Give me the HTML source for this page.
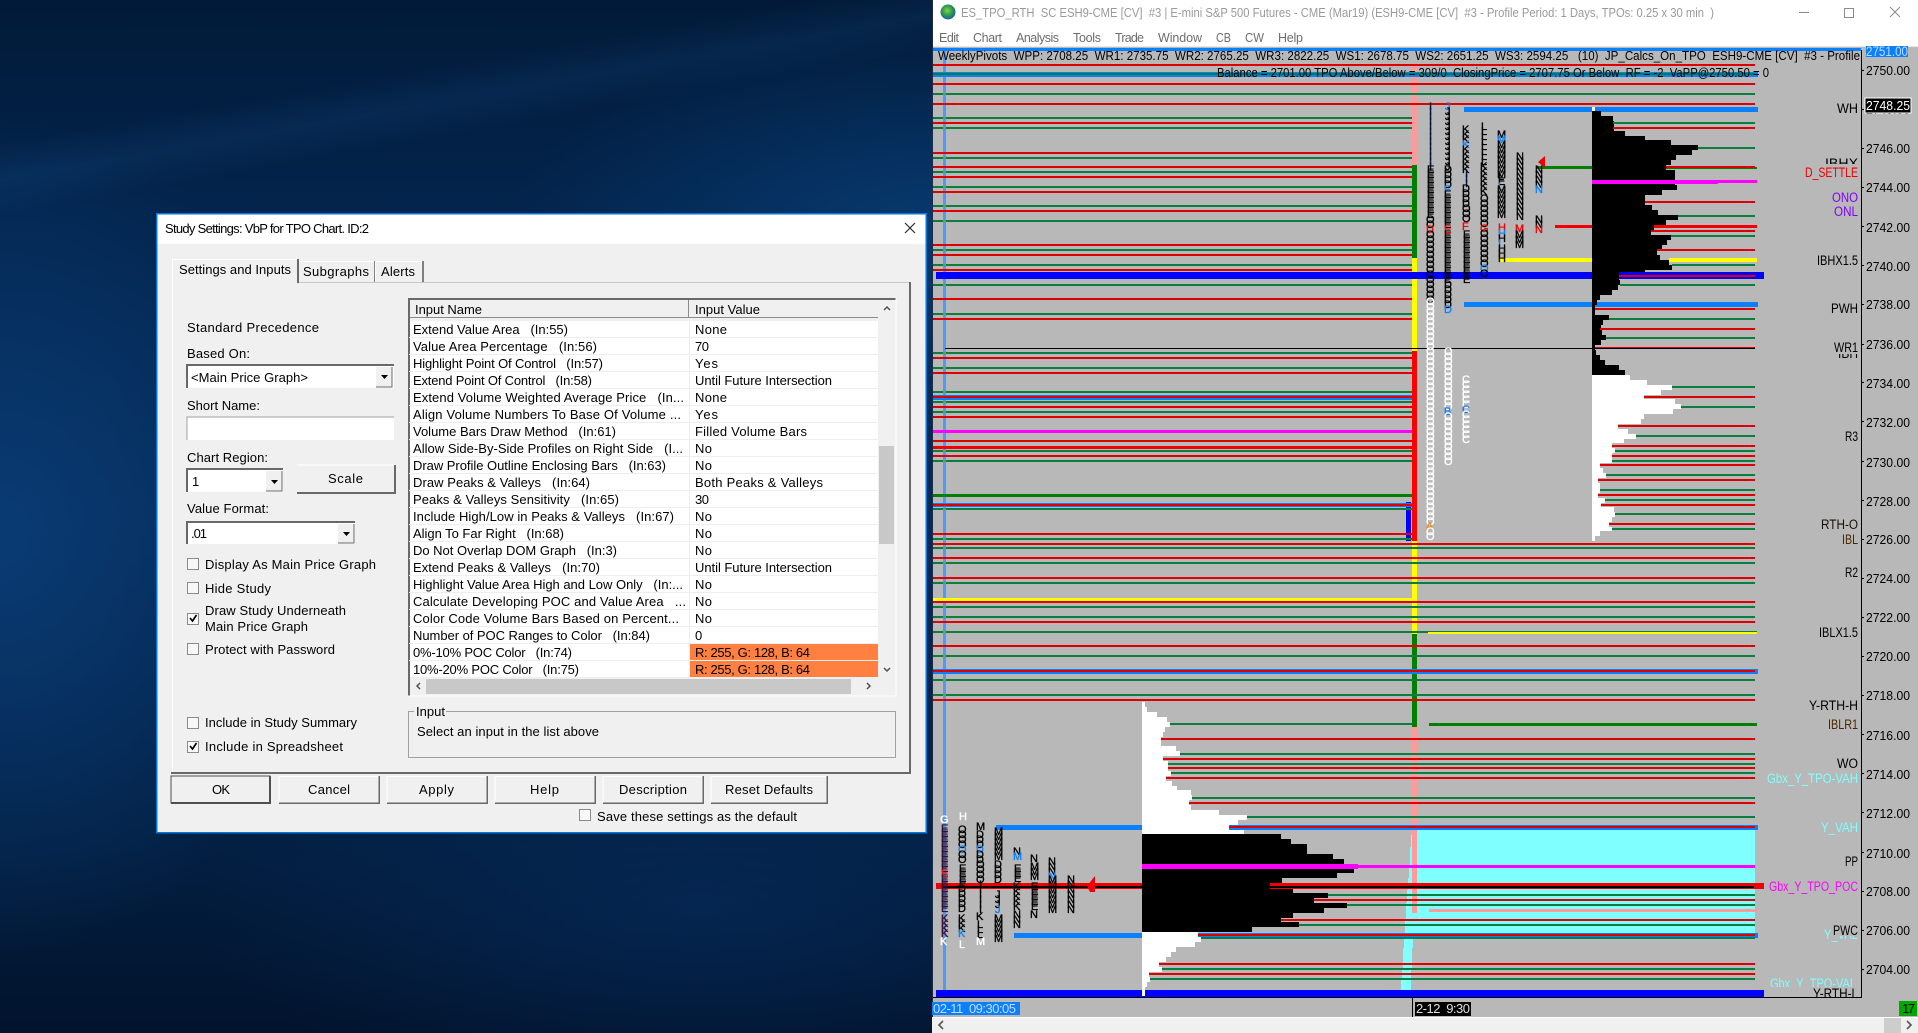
<!DOCTYPE html>
<html><head><meta charset="utf-8"><title>Study Settings</title>
<style>
html,body{margin:0;padding:0;width:1918px;height:1033px;overflow:hidden;background:#03203f}
#bg{position:absolute;left:0;top:0;width:932px;height:1033px;background:
linear-gradient(170deg,rgba(30,100,170,0) 12%,rgba(30,100,170,.14) 15%,rgba(30,100,170,0) 18%),
radial-gradient(ellipse 420px 200px at 100% 22%,rgba(8,66,125,.7),rgba(8,66,125,0) 100%),
radial-gradient(ellipse 330px 420px at 0% 52%,rgba(10,62,120,.85),rgba(10,62,120,0) 100%),
radial-gradient(ellipse 500px 200px at 75% 88%,rgba(6,45,95,.6),rgba(6,45,95,0) 100%),
linear-gradient(180deg,#021a38 0%,#03244c 20%,#052a58 50%,#031f42 82%,#02132c 100%)}
svg{position:absolute;left:0;top:0}
text{font-family:"Liberation Sans",sans-serif;white-space:pre}
.d text{font-size:13px;fill:#000}
.p text{font-size:13px;fill:#000}
.l text{font-size:13.5px;fill:#000}
.c{position:absolute;font:11px/5px "Liberation Sans",sans-serif;word-break:break-all;width:5px;color:#000;-webkit-text-stroke:.35px currentColor}
.c i{font-style:normal}.b{color:#0a80ff}.r{color:#f00000}.w{color:#fff}.o{color:#f08a20}
</style></head><body>
<div id="bg"></div>
<svg width="1918" height="1033" viewBox="0 0 1918 1033" xmlns="http://www.w3.org/2000/svg" shape-rendering="crispEdges">
<defs><radialGradient id="gl" cx=".45" cy=".4" r=".6"><stop offset="0" stop-color="#7fd24a"/><stop offset=".55" stop-color="#2f9a4a"/><stop offset="1" stop-color="#1a5fa8"/></radialGradient></defs>

<!-- chart window -->
<rect x="932" y="0" width="986" height="1033" fill="#fff"/>
<rect x="932" y="46" width="986" height="3" fill="#e8e8e8"/>
<rect x="932" y="0" width="1" height="1017" fill="#1c2c44"/>
<g shape-rendering="auto"><circle cx="948" cy="12" r="7.5" fill="url(#gl)"/></g>
<text x="961" y="17" font-size="12.5" fill="#9a9a9a" textLength="753" lengthAdjust="spacingAndGlyphs">ES_TPO_RTH  SC ESH9-CME [CV]  #3 | E-mini S&amp;P 500 Futures - CME (Mar19) (ESH9-CME [CV]  #3 - Profile Period: 1 Days, TPOs: 0.25 x 30 min  )</text>
<g font-size="12.5" fill="#6d6d6d">
<text x="939" y="42" textLength="20">Edit</text><text x="973" y="42" textLength="29">Chart</text><text x="1016" y="42" textLength="43">Analysis</text><text x="1073" y="42" textLength="28">Tools</text><text x="1115" y="42" textLength="29">Trade</text><text x="1158" y="42" textLength="44">Window</text><text x="1216" y="42" textLength="15" lengthAdjust="spacingAndGlyphs">CB</text><text x="1245" y="42" textLength="19" lengthAdjust="spacingAndGlyphs">CW</text><text x="1278" y="42" textLength="25">Help</text>
</g>
<path d="M1799 12.5h10" stroke="#8a8a8a" fill="none"/>
<rect x="1844.5" y="8.5" width="9" height="9" fill="none" stroke="#8a8a8a"/>
<g shape-rendering="auto"><path d="M1890 7l10 10M1900 7l-10 10" stroke="#8a8a8a" fill="none"/></g>

<!-- chart area -->
<rect x="933" y="47" width="985" height="970" fill="#b8b8b8"/>
<rect x="933" y="48" width="928" height="3" fill="#0a80ff"/>
<rect x="943" y="51" width="3" height="947" fill="#4a9bff"/>

<!-- cyan -->
<path fill="#7fffff" d="M1755 830H1412V835H1411V847H1410V867H1409V878H1408V890H1407V903H1406V920H1405V933H1755ZM1404 933H1413V948H1404ZM1403 948H1412V970H1403ZM1402 970H1411V980H1402ZM1401 980H1411V990H1401Z"/>

<!-- vertical multi colour bar -->
<rect x="1412" y="64" width="5" height="101" fill="#ff9a9a"/>
<rect x="1412" y="165" width="5" height="93" fill="#007f00"/>
<rect x="1412" y="258" width="5" height="93" fill="#ffff00"/>
<rect x="1412" y="351" width="5" height="190" fill="#ff0000"/>
<rect x="1412" y="541" width="5" height="93" fill="#ffff00"/>
<rect x="1412" y="634" width="5" height="93" fill="#007f00"/>
<rect x="1412" y="727" width="5" height="186" fill="#ff9a9a"/>
<rect x="1406" y="502" width="5" height="39" fill="#0000ff"/>

<!-- thick blue -->
<g fill="#0a80ff">
<rect x="933" y="72" width="825" height="5"/>
<rect x="933" y="395" width="479" height="5"/>
<rect x="933" y="503" width="479" height="4"/>
<rect x="933" y="669" width="825" height="5"/>
<rect x="1464" y="107" width="294" height="5"/>
<rect x="1464" y="302" width="294" height="5"/>
<rect x="996" y="825" width="146" height="5"/>
<rect x="1229" y="825" width="529" height="5"/>
<rect x="1014" y="933" width="128" height="5"/>
<rect x="1198" y="933" width="560" height="5"/>
</g>

<!-- profiles -->
<g transform="translate(1592)">
<path fill="#000" d="M0 111H9V116H21V121H22V131H33V136H53V140H79V145H106V150H100V155H84V160H79V165H74V170H83V185H85V190H70V195H53V205H60V210H66V215H86V220H74V225H62V230H59V235H79V240H75V245H70V250H65V255H68V260H77V265H80V270H53V275H27V280H28V285H26V290H20V295H8V300H5V305H3V315H17V320H11V325H9V330H10V335H14V340H9V345H3V350H4V355H8V360H13V365H27V370H33V375H0Z"/>
<path fill="#fff" d="M0 375H38V380H55V385H80V390H69V395H52V399H83V404H89V409H81V414H52V419H49V424H26V429H36V434H44V439H32V443H20V448H23V453H20V463H8V468H11V473H14V478H6V483H8V493H6V498H13V503H9V507H22V512H23V517H20V522H17V527H20V531H8V536H3V541H0Z"/>
<rect x="0" y="107" width="3" height="4" fill="#fff"/>
</g>
<g transform="translate(1142)">
<path fill="#fff" d="M0 702H3V707H5V712H15V717H25V722H28V727H23V732H21V737H19V746H34V751H38V756H21V761H26V771H29V776H24V781H30V786H35V790H49V795H50V800H47V805H49V810H77V815H105V820H96V825H87V830H102V834H0Z"/>
<path fill="#000" d="M0 834H139V839H149V844H165V854H191V859H202V864H216V869H212V873H195V878H140V883H128V888H151V893H186V898H172V903H205V908H182V913H151V918H139V922H157V927H110V932H0Z"/>
<path fill="#fff" d="M0 932H56V937H59V942H53V947H34V952H29V957H24V962H17V967H20V972H7V977H8V982H5V987H3V996H0Z"/>
</g>

<!-- green thin lines -->
<path stroke="#0b7d3e" stroke-width="2" fill="none" d="M933 74H1755M933 94H1755M933 118H1412M933 128H1412M933 158H1412M933 172H1412M933 187H1412M933 206H1412M933 221H1412M933 250H1412M933 265H1412M933 285H1412M933 314H1412M933 353H1412M933 368H1412M933 392H1412M933 402H1412M933 412H1412M933 451H1412M933 461H1412M933 509H1412M933 539H1412
M933 548H1755M933 563H1755M933 583H1755M933 607H1755M933 617H1755M933 632H1755M933 656H1755M933 680H1755M933 695H1755
M1613 123H1755M1698 148H1755M1678 216H1755M1671 236H1755M1672 265H1755M1620 285H1755M1609 319H1755M1606 338H1755M1672 387H1755M1681 407H1755M1636 436H1755M1615 451H1755M1612 461H1755M1606 475H1755M1600 490H1755M1605 500H1755M1615 514H1755M1612 529H1755
M1170 724H1412M1180 754H1755M1168 764H1755M1171 773H1755M1192 798H1755M1247 817H1755M1328 895H1755M1347 905H1755M1299 925H1755M1201 938H1755M1162 969H1755M1150 979H1755"/>
<!-- olive crossings -->
<path stroke="#7f9a24" stroke-width="2" fill="none" d="M943 94h3M943 118h3M943 128h3M943 158h3M943 172h3M943 187h3M943 206h3M943 221h3M943 250h3M943 265h3M943 285h3M943 314h3M943 353h3M943 368h3M943 392h3M943 402h3M943 412h3M943 451h3M943 461h3M943 509h3M943 539h3M943 548h3M943 563h3M943 583h3M943 607h3M943 617h3M943 632h3M943 656h3M943 680h3M943 695h3"/>
<!-- red thin lines -->
<path stroke="#dc0000" stroke-width="2" fill="none" d="M933 65H1755M933 84H1755M933 104H1755M933 123H1412M933 153H1412M933 167H1412M933 177H1412M933 192H1412M933 211H1412M933 245H1412M933 255H1412M933 270H1412M933 299H1412M933 319H1412M933 358H1412M933 373H1412M933 397H1412M933 407H1412M933 417H1412M933 441H1412M933 456H1412M933 505H1412M933 534H1412
M933 544H1755M933 558H1755M933 578H1755M933 602H1755M933 622H1755M933 646H1755M933 671H1755M933 700H1755
M1613 128H1755M1666 167H1755M1645 202H1755M1651 231H1755M1657 250H1755M1619 275H1755M1595 309H1755M1600 329H1755M1595 348H1755M1644 397H1755M1618 426H1755M1612 446H1755M1612 456H1755M1600 465H1755M1598 480H1755M1598 495H1755M1601 505H1755M1609 524H1755
M1161 739H1755M1163 759H1755M1168 768H1755M1166 778H1755M1189 803H1755M1229 827H1755M1314 900H1755M1281 920H1755M1198 935H1755M1159 964H1755M1149 974H1755"/>

<!-- thick lines -->
<rect x="933" y="430" width="479" height="3" fill="#ff00ff"/>
<rect x="933" y="446" width="479" height="3" fill="#f00000"/>
<rect x="933" y="494" width="479" height="3" fill="#007f00"/>
<rect x="933" y="598" width="479" height="3" fill="#ffff00"/>
<rect x="945" y="348" width="810" height="1" fill="#000"/>
<rect x="936" y="272" width="828" height="7" fill="#0000ff"/>
<rect x="1592" y="272" width="27" height="7" fill="#000"/>
<rect x="1619" y="275" width="136" height="2" fill="#dc0000"/>
<rect x="936" y="990" width="828" height="7" fill="#0000ff"/>
<rect x="1142" y="990" width="3" height="6" fill="#fff"/>
<rect x="1537" y="166" width="55" height="3" fill="#007f00"/>
<rect x="1666" y="167" width="91" height="2" fill="#007f00"/>
<rect x="1666" y="166" width="89" height="2" fill="#dc0000"/>
<rect x="1555" y="225" width="37" height="3" fill="#f00000"/>
<rect x="1654" y="225" width="103" height="3" fill="#f00000"/>
<rect x="1500" y="258" width="92" height="4" fill="#ffff00"/>
<rect x="1669" y="258" width="88" height="4" fill="#ffff00"/>
<rect x="1592" y="180" width="165" height="3" fill="#ff00ff"/>
<rect x="1592" y="180" width="126" height="4" fill="#ff00ff"/>
<rect x="1428" y="631" width="329" height="3" fill="#ffff00"/>
<rect x="1428" y="631" width="329" height="1" fill="#0b7d3e"/>
<rect x="1429" y="723" width="328" height="3" fill="#007f00"/>
<rect x="1429" y="909" width="328" height="3" fill="#ff9a9a"/>
<rect x="936" y="883" width="206" height="6" fill="#f00000"/>
<rect x="1270" y="883" width="494" height="6" fill="#f00000"/>
<rect x="943" y="886" width="199" height="2" fill="#000"/>
<rect x="1142" y="886" width="128" height="2" fill="#000"/>
<rect x="1270" y="886" width="484" height="2" fill="#000"/>
<rect x="1142" y="864" width="216" height="5" fill="#ff00ff"/>
<rect x="1358" y="865" width="397" height="3" fill="#ff00ff"/>
<rect x="1412" y="725" width="5" height="2" fill="#007f00"/>
<g shape-rendering="auto">
<path d="M1538 162L1545 156V168Z" fill="#f00000"/>
<path d="M1087 886L1095 876V892H1090Z" fill="#f00000"/>
</g>

<text x="938" y="60" font-size="13" fill="#000" textLength="922" lengthAdjust="spacingAndGlyphs">WeeklyPivots  WPP: 2708.25  WR1: 2735.75  WR2: 2765.25  WR3: 2822.25  WS1: 2678.75  WS2: 2651.25  WS3: 2594.25   (10)  JP_Calcs_On_TPO  ESH9-CME [CV]  #3 - Profile</text>
<text x="1217" y="77" font-size="13" fill="#000" textLength="552" lengthAdjust="spacingAndGlyphs">Balance = 2701.00 TPO Above/Below = 309/0  ClosingPrice = 2707.75 Or Below  RF = -2  VaPP@2750.50 = 0</text>

<!-- axis -->
<rect x="1861" y="50" width="1" height="947" fill="#000"/>
<path stroke="#000" fill="none" d="M1862 70.5h2M1862 148.5h2M1862 187.5h2M1862 226.5h2M1862 265.5h2M1862 304.5h2M1862 344.5h2M1862 382.5h2M1862 421.5h2M1862 461.5h2M1862 500.5h2M1862 539.5h2M1862 578.5h2M1862 617.5h2M1862 656.5h2M1862 695.5h2M1862 734.5h2M1862 773.5h2M1862 812.5h2M1862 852.5h2M1862 891.5h2M1862 930.5h2M1862 969.5h2M1862 109.5h2"/>
<rect x="1866" y="46" width="42" height="11" fill="#0a80ff"/>
<svg x="1866" y="46" width="42" height="11"><text x="0" y="10" font-size="13.5" fill="#b8dcff" textLength="42" lengthAdjust="spacingAndGlyphs">2751.00</text></svg>
<g class="p">
<text x="1866" y="75" textLength="44" lengthAdjust="spacingAndGlyphs">2750.00</text>
<text x="1866" y="114" textLength="44" lengthAdjust="spacingAndGlyphs">2748.00</text>
<text x="1866" y="153" textLength="44" lengthAdjust="spacingAndGlyphs">2746.00</text>
<text x="1866" y="192" textLength="44" lengthAdjust="spacingAndGlyphs">2744.00</text>
<text x="1866" y="232" textLength="44" lengthAdjust="spacingAndGlyphs">2742.00</text>
<text x="1866" y="271" textLength="44" lengthAdjust="spacingAndGlyphs">2740.00</text>
<text x="1866" y="309" textLength="44" lengthAdjust="spacingAndGlyphs">2738.00</text>
<text x="1866" y="349" textLength="44" lengthAdjust="spacingAndGlyphs">2736.00</text>
<text x="1866" y="388" textLength="44" lengthAdjust="spacingAndGlyphs">2734.00</text>
<text x="1866" y="427" textLength="44" lengthAdjust="spacingAndGlyphs">2732.00</text>
<text x="1866" y="467" textLength="44" lengthAdjust="spacingAndGlyphs">2730.00</text>
<text x="1866" y="506" textLength="44" lengthAdjust="spacingAndGlyphs">2728.00</text>
<text x="1866" y="544" textLength="44" lengthAdjust="spacingAndGlyphs">2726.00</text>
<text x="1866" y="583" textLength="44" lengthAdjust="spacingAndGlyphs">2724.00</text>
<text x="1866" y="622" textLength="44" lengthAdjust="spacingAndGlyphs">2722.00</text>
<text x="1866" y="661" textLength="44" lengthAdjust="spacingAndGlyphs">2720.00</text>
<text x="1866" y="700" textLength="44" lengthAdjust="spacingAndGlyphs">2718.00</text>
<text x="1866" y="740" textLength="44" lengthAdjust="spacingAndGlyphs">2716.00</text>
<text x="1866" y="779" textLength="44" lengthAdjust="spacingAndGlyphs">2714.00</text>
<text x="1866" y="818" textLength="44" lengthAdjust="spacingAndGlyphs">2712.00</text>
<text x="1866" y="858" textLength="44" lengthAdjust="spacingAndGlyphs">2710.00</text>
<text x="1866" y="896" textLength="44" lengthAdjust="spacingAndGlyphs">2708.00</text>
<text x="1866" y="935" textLength="44" lengthAdjust="spacingAndGlyphs">2706.00</text>
<text x="1866" y="974" textLength="44" lengthAdjust="spacingAndGlyphs">2704.00</text>
</g>
<rect x="1865" y="98" width="46" height="15" fill="#000" stroke="#fff"/>
<text x="1866" y="110" font-size="13" fill="#fff" textLength="44" lengthAdjust="spacingAndGlyphs">2748.25</text>

<!-- right labels -->
<g class="l">
<text x="1825" y="168" textLength="33" lengthAdjust="spacingAndGlyphs">IBHX</text>
<rect x="1805" y="164" width="53" height="16" fill="#b8b8b8"/>
<text x="1837" y="113" textLength="21" lengthAdjust="spacingAndGlyphs">WH</text>
<text x="1805" y="177" style="fill:#f00000" textLength="53" lengthAdjust="spacingAndGlyphs">D_SETTLE</text>
<text x="1832" y="202" style="fill:#8000ff" textLength="26" lengthAdjust="spacingAndGlyphs">ONO</text>
<text x="1834" y="216" style="fill:#8000ff" textLength="24" lengthAdjust="spacingAndGlyphs">ONL</text>
<text x="1817" y="265" textLength="41" lengthAdjust="spacingAndGlyphs">IBHX1.5</text>
<text x="1831" y="313" textLength="27" lengthAdjust="spacingAndGlyphs">PWH</text>
<text x="1838" y="358" textLength="20" lengthAdjust="spacingAndGlyphs">IBH</text>
<rect x="1834" y="340" width="24" height="14" fill="#b8b8b8"/>
<text x="1834" y="352" textLength="24" lengthAdjust="spacingAndGlyphs">WR1</text>
<text x="1845" y="441" textLength="13" lengthAdjust="spacingAndGlyphs">R3</text>
<text x="1821" y="529" style="fill:#1a1008" textLength="37" lengthAdjust="spacingAndGlyphs">RTH-O</text>
<text x="1842" y="544" style="fill:#4a2800" textLength="16" lengthAdjust="spacingAndGlyphs">IBL</text>
<text x="1845" y="577" textLength="13" lengthAdjust="spacingAndGlyphs">R2</text>
<text x="1819" y="637" textLength="39" lengthAdjust="spacingAndGlyphs">IBLX1.5</text>
<text x="1809" y="710" textLength="49" lengthAdjust="spacingAndGlyphs">Y-RTH-H</text>
<text x="1828" y="729" style="fill:#4a2800" textLength="30" lengthAdjust="spacingAndGlyphs">IBLR1</text>
<text x="1837" y="768" textLength="21" lengthAdjust="spacingAndGlyphs">WO</text>
<text x="1767" y="783" style="fill:#7fffff" textLength="91" lengthAdjust="spacingAndGlyphs">Gbx_Y_TPO-VAH</text>
<text x="1821" y="832" style="fill:#7fffff" textLength="37" lengthAdjust="spacingAndGlyphs">Y_VAH</text>
<text x="1845" y="866" textLength="13" lengthAdjust="spacingAndGlyphs">PP</text>
<text x="1769" y="891" style="fill:#ff00ff" textLength="89" lengthAdjust="spacingAndGlyphs">Gbx_Y_TPO_POC</text>
<text x="1824" y="939" style="fill:#7fffff" textLength="34" lengthAdjust="spacingAndGlyphs">Y_VAL</text>
<rect x="1832" y="923" width="26" height="13" fill="#b8b8b8"/>
<text x="1833" y="935" textLength="25" lengthAdjust="spacingAndGlyphs">PWC</text>
<text x="1770" y="988" style="fill:#7fffff" textLength="86" lengthAdjust="spacingAndGlyphs">Gbx_Y_TPO-VAL</text>
<rect x="1770" y="987" width="88" height="10" fill="#b8b8b8"/>
<text x="1813" y="998" textLength="45" lengthAdjust="spacingAndGlyphs">Y-RTH-L</text>
</g>

<!-- bottom -->
<rect x="933" y="997" width="985" height="20" fill="#b8b8b8"/>
<rect x="933" y="997" width="929" height="1" fill="#000"/>
<rect x="1412" y="997" width="1" height="20" fill="#000"/>
<rect x="932" y="1002" width="88" height="13" fill="#0a80ff"/>
<text x="933" y="1013" font-size="13" fill="#c4dcf6" textLength="83">02-11  09:30:05</text>
<rect x="1415" y="1002" width="56" height="14" fill="#000"/>
<text x="1416" y="1013" font-size="13" fill="#e0e0e0" textLength="54">2-12  9:30</text>
<rect x="1899" y="1001" width="18" height="15" fill="#00a800"/>
<text x="1902" y="1013" font-size="13" fill="#000" textLength="13">17</text>
<rect x="932" y="1017" width="986" height="16" fill="#f0f0f0"/>
<rect x="932" y="1017" width="986" height="1" fill="#fff"/>
<rect x="1884" y="1018" width="17" height="15" fill="#cdcdcd"/>
<g shape-rendering="auto"><path d="M943 1021l-4 4 4 4M1907 1021l4 4-4 4" stroke="#555" stroke-width="1.6" fill="none"/></g>

<!-- DIALOG -->
<g class="d">
<rect x="156" y="214" width="770" height="618" fill="#f0f0f0"/>
<rect x="156" y="214" width="770" height="30" fill="#fff"/>
<rect x="156.5" y="213.5" width="769.5" height="619" fill="none" stroke="#0078d7" stroke-width="1.5"/>
<text x="165" y="233" textLength="204">Study Settings: VbP for TPO Chart. ID:2</text>
<g shape-rendering="auto"><path d="M905 223l10 10M915 223l-10 10" stroke="#222" fill="none" stroke-width="1.1"/></g>

<!-- tabs -->
<rect x="172" y="282" width="739" height="491" fill="#f0f0f0"/>
<rect x="172" y="282" width="739" height="1" fill="#c8c8c8"/>
<rect x="172" y="282" width="1" height="491" fill="#fff"/>
<rect x="909" y="282" width="2" height="492" fill="#696969"/>
<rect x="171" y="772" width="740" height="2" fill="#696969"/>
<rect x="172" y="259" width="126" height="24" fill="#f0f0f0"/>
<rect x="172" y="259" width="126" height="1" fill="#fff"/>
<rect x="172" y="259" width="1" height="24" fill="#fff"/>
<rect x="297" y="259" width="2" height="24" fill="#696969"/>
<rect x="299" y="261" width="76" height="1" fill="#fff"/>
<rect x="374" y="261" width="1" height="21" fill="#808080"/>
<rect x="375" y="261" width="1" height="21" fill="#fff"/>
<rect x="376" y="261" width="47" height="1" fill="#fff"/>
<rect x="422" y="261" width="2" height="21" fill="#808080"/>
<text x="179" y="274" textLength="112">Settings and Inputs</text>
<text x="303" y="276" textLength="66">Subgraphs</text>
<text x="381" y="276" textLength="34">Alerts</text>

<!-- left labels -->
<text x="187" y="332" textLength="132">Standard Precedence</text>
<text x="187" y="358" textLength="63">Based On:</text>
<rect x="187" y="365" width="207" height="23" fill="#fff"/>
<path d="M187 388V365H394" fill="none" stroke="#696969" stroke-width="2"/>
<rect x="376" y="367" width="16" height="20" fill="#f0f0f0"/>
<path d="M392 367V387H376" fill="none" stroke="#696969"/>
<path d="M381 375h7l-3.5 4z" fill="#000" shape-rendering="auto"/>
<text x="191" y="382" textLength="117">&lt;Main Price Graph&gt;</text>
<text x="187" y="410" textLength="73">Short Name:</text>
<rect x="187" y="417" width="207" height="23" fill="#fff"/>
<path d="M187 440V417H394" fill="none" stroke="#a0a0a0" stroke-width="1"/>
<text x="187" y="462" textLength="81">Chart Region:</text>
<rect x="187" y="469" width="96" height="23" fill="#fff"/>
<path d="M187 492V469H283" fill="none" stroke="#696969" stroke-width="2"/>
<rect x="266" y="471" width="16" height="20" fill="#f0f0f0"/>
<path d="M282 471V491H266" fill="none" stroke="#696969"/>
<path d="M271 480h7l-3.5 4z" fill="#000" shape-rendering="auto"/>
<text x="192" y="486">1</text>
<rect x="297" y="465" width="98" height="28" fill="#f0f0f0"/>
<path d="M297 465H395" stroke="#fff" fill="none"/>
<path d="M395 465V493H297" stroke="#696969" fill="none" stroke-width="2"/>
<text x="328" y="483" textLength="35">Scale</text>
<text x="187" y="513" textLength="82">Value Format:</text>
<rect x="187" y="522" width="168" height="22" fill="#fff"/>
<path d="M187 544V522H355" fill="none" stroke="#696969" stroke-width="2"/>
<rect x="338" y="524" width="16" height="19" fill="#f0f0f0"/>
<path d="M354 524V543H338" fill="none" stroke="#696969"/>
<path d="M343 532h7l-3.5 4z" fill="#000" shape-rendering="auto"/>
<text x="191" y="538" textLength="16">.01</text>

<!-- checkboxes -->
<g fill="#f8f8f8" stroke="#8a8a8a">
<rect x="187.5" y="558.5" width="11" height="11"/>
<rect x="187.5" y="582.5" width="11" height="11"/>
<rect x="187.5" y="613.5" width="11" height="11"/>
<rect x="187.5" y="643.5" width="11" height="11"/>
<rect x="187.5" y="717.5" width="11" height="11"/>
<rect x="187.5" y="741.5" width="11" height="11"/>
<rect x="579.5" y="809.5" width="11" height="11"/>
</g>
<g shape-rendering="auto" fill="none" stroke="#000" stroke-width="1.7"><path d="M190 618l2.5 3 4-6"/><path d="M190 746l2.5 3 4-6"/></g>
<text x="205" y="569" textLength="171">Display As Main Price Graph</text>
<text x="205" y="593" textLength="66">Hide Study</text>
<text x="205" y="615" textLength="141">Draw Study Underneath</text>
<text x="205" y="631" textLength="103">Main Price Graph</text>
<text x="205" y="654" textLength="130">Protect with Password</text>
<text x="205" y="727" textLength="152">Include in Study Summary</text>
<text x="205" y="751" textLength="138">Include in Spreadsheet</text>
<text x="597" y="821" textLength="200">Save these settings as the default</text>

<!-- grid -->
<rect x="408" y="298" width="488" height="398" fill="#f0f0f0"/>
<rect x="409" y="321" width="469" height="356" fill="#fff"/>
<path d="M409 696V299H896" fill="none" stroke="#696969" stroke-width="2"/>
<path d="M896 298V696H408" fill="none" stroke="#fff"/>
<rect x="410" y="317" width="468" height="1" fill="#8a8a8a"/>
<rect x="688" y="300" width="1" height="18" fill="#8a8a8a"/>
<text x="415" y="314" textLength="67">Input Name</text>
<text x="695" y="314" textLength="65">Input Value</text>
<path stroke="#eeeeee" fill="none" d="M409 337.5H878M409 354.5H878M409 371.5H878M409 388.5H878M409 405.5H878M409 422.5H878M409 439.5H878M409 456.5H878M409 473.5H878M409 490.5H878M409 507.5H878M409 524.5H878M409 541.5H878M409 558.5H878M409 575.5H878M409 592.5H878M409 609.5H878M409 626.5H878M409 643.5H878M409 660.5H878M689.5 321V677"/>
<rect x="690" y="644" width="188" height="16" fill="#ff8040"/>
<rect x="690" y="661" width="188" height="16" fill="#ff8040"/>
<rect x="879" y="446" width="15" height="98" fill="#c8c8c8"/>
<rect x="426" y="679" width="425" height="15" fill="#c8c8c8"/>
<g shape-rendering="auto" fill="none" stroke="#505050" stroke-width="1.5"><path d="M884 310l3-3 3 3M884 668l3 3 3-3M420 683l-3 3 3 3M867 683l3 3-3 3"/></g>

<text x="413" y="334" textLength="155">Extend Value Area   (In:55)</text><text x="695" y="334" textLength="32">None</text>
<text x="413" y="351" textLength="184">Value Area Percentage   (In:56)</text><text x="695" y="351" textLength="14">70</text>
<text x="413" y="368" textLength="190">Highlight Point Of Control   (In:57)</text><text x="695" y="368" textLength="23">Yes</text>
<text x="413" y="385" textLength="179">Extend Point Of Control   (In:58)</text><text x="695" y="385" textLength="137">Until Future Intersection</text>
<text x="413" y="402" textLength="271">Extend Volume Weighted Average Price   (In...</text><text x="695" y="402" textLength="32">None</text>
<text x="413" y="419" textLength="268">Align Volume Numbers To Base Of Volume ...</text><text x="695" y="419" textLength="23">Yes</text>
<text x="413" y="436" textLength="203">Volume Bars Draw Method   (In:61)</text><text x="695" y="436" textLength="112">Filled Volume Bars</text>
<text x="413" y="453" textLength="270">Allow Side-By-Side Profiles on Right Side   (I...</text><text x="695" y="453" textLength="17">No</text>
<text x="413" y="470" textLength="253">Draw Profile Outline Enclosing Bars   (In:63)</text><text x="695" y="470" textLength="17">No</text>
<text x="413" y="487" textLength="177">Draw Peaks &amp; Valleys   (In:64)</text><text x="695" y="487" textLength="128">Both Peaks &amp; Valleys</text>
<text x="413" y="504" textLength="206">Peaks &amp; Valleys Sensitivity   (In:65)</text><text x="695" y="504" textLength="14">30</text>
<text x="413" y="521" textLength="261">Include High/Low in Peaks &amp; Valleys   (In:67)</text><text x="695" y="521" textLength="17">No</text>
<text x="413" y="538" textLength="151">Align To Far Right   (In:68)</text><text x="695" y="538" textLength="17">No</text>
<text x="413" y="555" textLength="204">Do Not Overlap DOM Graph   (In:3)</text><text x="695" y="555" textLength="17">No</text>
<text x="413" y="572" textLength="187">Extend Peaks &amp; Valleys   (In:70)</text><text x="695" y="572" textLength="137">Until Future Intersection</text>
<text x="413" y="589" textLength="270">Highlight Value Area High and Low Only   (In:...</text><text x="695" y="589" textLength="17">No</text>
<text x="413" y="606" textLength="273">Calculate Developing POC and Value Area   ...</text><text x="695" y="606" textLength="17">No</text>
<text x="413" y="623" textLength="266">Color Code Volume Bars Based on Percent...</text><text x="695" y="623" textLength="17">No</text>
<text x="413" y="640" textLength="237">Number of POC Ranges to Color   (In:84)</text><text x="695" y="640" textLength="7">0</text>
<text x="413" y="657" textLength="159">0%-10% POC Color   (In:74)</text><text x="695" y="657" textLength="115">R: 255, G: 128, B: 64</text>
<text x="413" y="674" textLength="166">10%-20% POC Color   (In:75)</text><text x="695" y="674" textLength="115">R: 255, G: 128, B: 64</text>

<!-- input group -->
<rect x="408.5" y="711.5" width="487" height="46" fill="none" stroke="#a0a0a0"/>
<rect x="414" y="708" width="32" height="8" fill="#f0f0f0"/>
<text x="416" y="716" textLength="29">Input</text>
<text x="417" y="736" textLength="182">Select an input in the list above</text>

<!-- buttons -->
<rect x="171" y="776" width="99" height="27" fill="#f0f0f0" stroke="#505050" stroke-width="1"/>
<path d="M270 776V803H171" fill="none" stroke="#505050" stroke-width="2"/>
<text x="212" y="794" textLength="18">OK</text>
<g fill="#f0f0f0">
<rect x="279" y="776" width="100" height="27"/><rect x="387" y="776" width="100" height="27"/><rect x="495" y="776" width="100" height="27"/><rect x="603" y="776" width="100" height="27"/><rect x="711" y="776" width="116" height="27"/>
</g>
<path fill="none" stroke="#fff" d="M279 803V776.5H379M387 803V776.5H487M495 803V776.5H595M603 803V776.5H703M711 803V776.5H827"/>
<path fill="none" stroke="#696969" stroke-width="1.5" d="M379 776V803H279M487 776V803H387M595 776V803H495M703 776V803H603M827 776V803H711"/>
<text x="308" y="794" textLength="42">Cancel</text>
<text x="419" y="794" textLength="35">Apply</text>
<text x="530" y="794" textLength="29">Help</text>
<text x="619" y="794" textLength="68">Description</text>
<text x="725" y="794" textLength="88">Reset Defaults</text>
</g>
</svg>

<!-- TPO letter columns (upper) -->
<div class="c" style="left:1429px;top:105px;color:#001040">IIIIIIIIIIIII</div>
<div class="c" style="left:1427px;top:168px">EEEEEEEEEE</div>
<div class="c" style="left:1426px;top:218px">OO<i class="r">D</i>OOOOOOOOOOOOOO</div>
<div class="c w" style="left:1426px;top:300px">OOOOOOOOOOOOOOOOOOOOOOOOOOOOOOOOOOOOOOOOOOOOO<i class="o">A</i>OO</div>
<div class="c" style="left:1445px;top:105px"><i class="b">J</i>JJJJJJJJJJJJ</div>
<div class="c" style="left:1444px;top:168px">DDDD<i class="b">F</i>EEEEEEE<i class="r">E</i>EEEEEEEEEEDDDDD<i class="b">D</i></div>
<div class="c w" style="left:1444px;top:350px">OOOOOOOOOOOO<i class="b">B</i>OOOOOOOOOO</div>
<div class="c" style="left:1462px;top:128px">KKK<i class="b">K</i>KKKKK</div>
<div class="c" style="left:1465px;top:172px;color:#001040">III</div>
<div class="c" style="left:1462px;top:187px">DDDDOOO</div>
<div class="c r" style="left:1462px;top:225px">F</div>
<div class="c" style="left:1463px;top:233px">EEEEEEEEEE</div>
<div class="c w" style="left:1462px;top:378px">CCCCCC<i class="b">C</i>CCCCCC</div>
<div class="c" style="left:1481px;top:125px">LLLLLLLL</div>
<div class="c" style="left:1480px;top:165px">KKKKKK</div>
<div class="c" style="left:1480px;top:197px">OOOOOO<i class="r">G</i></div>
<div class="c" style="left:1480px;top:232px">OOOOOOO<i class="b">O</i>O</div>
<div class="c" style="left:1497px;top:133px">M<i class="b">M</i>MMMMMMM</div>
<div class="c" style="left:1498px;top:175px">LE<i class="b">L</i></div>
<div class="c" style="left:1497px;top:188px">MMMMMM</div>
<div class="c r" style="left:1498px;top:226px">H</div>
<div class="c" style="left:1498px;top:232px"><i class="b">H</i>H<i class="b">I</i>HHH</div>
<div class="c" style="left:1516px;top:155px">NNNNNNNNNNNNN</div>
<div class="c r" style="left:1515px;top:227px">M</div>
<div class="c" style="left:1515px;top:233px">MMM</div>
<div class="c" style="left:1535px;top:168px">NNNN<i class="b">N</i></div>
<div class="c" style="left:1535px;top:218px">NN<i class="r">N</i></div>

<!-- TPO letter columns (lower) -->
<div class="c w" style="left:940px;top:818px">G</div>
<div class="c" style="left:941px;top:827px;color:#301030">EEEEEEEEE<i class="r">E</i>EEEEEEE</div>
<div class="c" style="left:941px;top:917px;color:#401030">KKKK</div>
<div class="c w" style="left:940px;top:940px">K</div>
<div class="c w" style="left:959px;top:815px">H</div>
<div class="c" style="left:958px;top:828px">OOOO<i class="b">O</i>OO</div>
<div class="c" style="left:959px;top:867px">EEEE</div>
<div class="c" style="left:958px;top:887px">DDDDD</div>
<div class="c" style="left:958px;top:917px">KKK<i class="b">K</i></div>
<div class="c w" style="left:959px;top:943px">L</div>
<div class="c" style="left:976px;top:825px">M</div>
<div class="c" style="left:976px;top:833px">DDD<i class="b">D</i>DD</div>
<div class="c" style="left:976px;top:863px">OOOO</div>
<div class="c" style="left:979px;top:883px">IIIIII</div>
<div class="c" style="left:976px;top:915px">K</div>
<div class="c" style="left:977px;top:923px">LLL</div>
<div class="c w" style="left:976px;top:940px">M</div>
<div class="c" style="left:994px;top:830px">MMMMMM</div>
<div class="c" style="left:994px;top:863px">DDDD</div>
<div class="c" style="left:995px;top:893px">JJJ<i class="b">J</i></div>
<div class="c" style="left:994px;top:917px">MMMMM</div>
<div class="c" style="left:1013px;top:850px">N<i class="b">M</i></div>
<div class="c" style="left:1014px;top:867px">EEE</div>
<div class="c" style="left:1013px;top:885px">KKKKK</div>
<div class="c" style="left:1013px;top:913px">NNN</div>
<div class="c" style="left:1030px;top:857px">N</div>
<div class="c" style="left:1030px;top:865px">MMM</div>
<div class="c" style="left:1031px;top:885px">EEEEE</div>
<div class="c" style="left:1030px;top:913px">N</div>
<div class="c" style="left:1048px;top:860px">NNN<i class="b">N</i></div>
<div class="c" style="left:1048px;top:878px">MMMMMMM</div>
<div class="c" style="left:1067px;top:878px">NNNNNNN</div>
</body></html>
